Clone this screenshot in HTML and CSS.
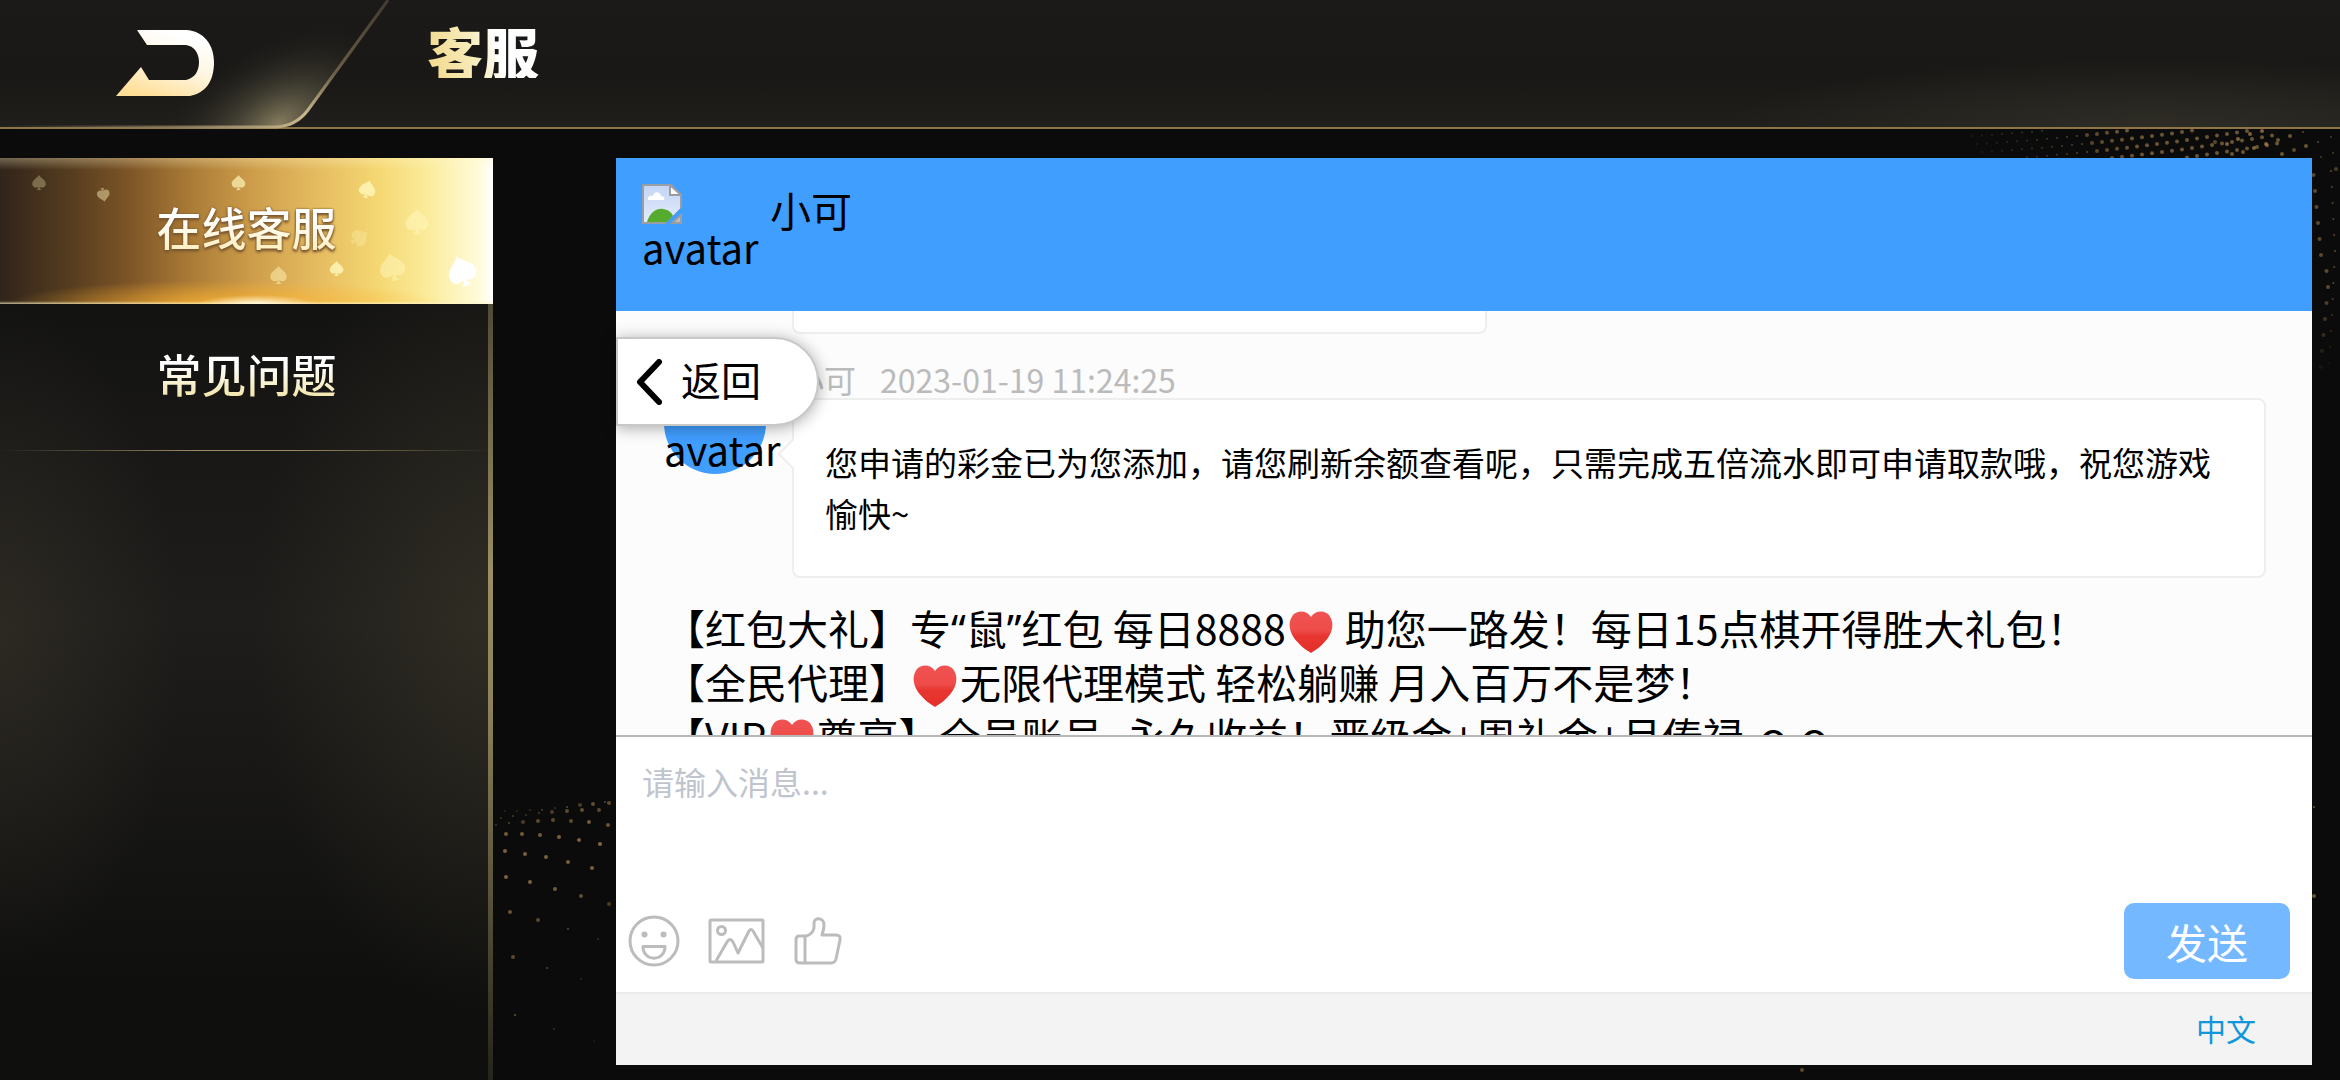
FILE: index.html
```html
<!DOCTYPE html>
<html lang="zh-CN">
<head>
<meta charset="utf-8">
<meta name="viewport" content="width=device-width, initial-scale=1">
<title>客服</title>
<link rel="stylesheet" href="styles.css">
<script src="dots.js" defer></script>
</head>
<body>
<svg class="defs" aria-hidden="true">
  <defs>
    <linearGradient id="gold" x1="0.7" y1="0.1" x2="0.3" y2="1"><stop offset="0" stop-color="#fff"/><stop offset="0.45" stop-color="#fff6e2"/><stop offset="1" stop-color="#ffdf98"/></linearGradient>
    <linearGradient id="edge" gradientUnits="userSpaceOnUse" x1="0" y1="127" x2="388" y2="0"><stop offset="0" stop-color="#8a7c5c" stop-opacity="0"/><stop offset="0.4" stop-color="#8a7c5c" stop-opacity=".8"/><stop offset="0.72" stop-color="#c9b88e"/><stop offset="0.82" stop-color="#6c5e47"/><stop offset="1" stop-color="#423b2f"/></linearGradient>
    <radialGradient id="glow" gradientUnits="userSpaceOnUse" cx="278" cy="124" r="140" gradientTransform="translate(278 124) rotate(-30) scale(1 .6) translate(-278 -124)"><stop offset="0" stop-color="#857b5d"/><stop offset="0.4" stop-color="#4d493a" stop-opacity=".7"/><stop offset="1" stop-color="#1c1b19" stop-opacity="0"/></radialGradient>
    <linearGradient id="red" x1="0" y1="0" x2="0" y2="1"><stop offset="0" stop-color="#f05252"/><stop offset="0.45" stop-color="#ee4c49"/><stop offset="0.6" stop-color="#e73630"/><stop offset="1" stop-color="#e42f2b"/></linearGradient>
    <linearGradient id="sky" x1="0" y1="0" x2="0" y2="1"><stop offset="0" stop-color="#c3d5f5"/><stop offset="1" stop-color="#e4ecfb"/></linearGradient>
    <symbol id="heart" viewBox="0 0 45 42"><path d="M22.500 6C18-1 9-1 4.500 4C-1.500 12 1 22 8 30C13 36 18 39 22.500 42C27 39 32 36 37 30C44 22 46.500 12 40.500 4C36-1 27-1 22.500 6Z" fill="url(#red)"/></symbol>
    <symbol id="spade" viewBox="0 0 20 22"><path d="M10 0C12 4 20 7 20 13C20 18 15 20 11 17.500C11 19 12 21 14 22H6C8 21 9 19 9 17.500C5 20 0 18 0 13C0 7 8 4 10 0Z"/></symbol>
    <symbol id="broken" viewBox="0 0 40 40"><path d="M1 1H29L39 11V25L25 39H1Z" fill="url(#sky)" stroke="#9a9da3" stroke-width="2"/><path d="M6 16C5 12 9 11 11 12C12 7 18 7 19 12C23 12 23 16 21 16Z" fill="#fff"/><path d="M5 38C8 28 15 24 21 25C27 26 30 29 31 32L25 38Z" fill="#55ab2e"/><path d="M28 1V11H39Z" fill="#fff" stroke="#9a9da3" stroke-width="2"/><path d="M40 23V28L29 40H23Z" fill="#409eff"/><path d="M39 31V39H30Z" fill="#b7c5b7" stroke="#9a9da3" stroke-width="2"/></symbol>
  </defs>
</svg>

<svg class="dots" id="dots" aria-hidden="true"></svg>

<header class="topbar">
  <svg class="topbar-art" width="400" height="129" aria-hidden="true">
    <path d="M0 0H388L308 112Q296 127 276 127H0Z" fill="url(#glow)"/>
    <path d="M0 127H276Q296 126 308 110L388 0" fill="none" stroke="url(#edge)" stroke-width="3"/>
  </svg>
  <button class="exit" type="button" aria-label="返回">
    <svg width="98" height="66" viewBox="116 30 98 66"><path d="M137 30H186C204 31 214 45 214 62C214 82 205 93 190 96H116L141 67L149 80H186C195 78 199 71 199 62C199 53 194 46 186 45H147Z" fill="url(#gold)"/></svg>
  </button>
  <h1 class="title">客服</h1>
</header>

<div class="content">
  <nav class="sidebar">
    <a class="tab tab-active" href="#online">
      <svg class="spades" viewBox="0 0 493 146" aria-hidden="true">
        <g fill="#fff6b8">
          <use href="#spade" x="32" y="17" width="14" height="15" opacity=".3"/>
          <use href="#spade" x="96" y="30" width="13" height="14" opacity=".45" transform="rotate(170 103 37)"/>
          <use href="#spade" x="231" y="17" width="15" height="15" opacity=".7"/>
          <use href="#spade" x="359" y="22" width="17" height="18" opacity=".85" transform="rotate(14 367 31)"/>
          <use href="#spade" x="404" y="51" width="26" height="25" opacity=".6"/>
          <use href="#spade" x="351" y="70" width="17" height="20" opacity=".3" transform="rotate(60 360 80)"/>
          <use href="#spade" x="378" y="95" width="28" height="28" opacity=".55" transform="rotate(-12 392 108)"/>
          <use href="#spade" x="329" y="103" width="15" height="15" opacity=".85"/>
          <use href="#spade" x="269" y="108" width="19" height="18" opacity=".5"/>
        </g>
        <use href="#spade" x="446" y="98" width="32" height="31" fill="#fff" transform="rotate(-20 461 114)"/>
      </svg>
      <span class="tab-label">在线客服</span>
    </a>
    <a class="tab" href="#faq"><span class="tab-label">常见问题</span></a>
  </nav>

  <main class="chat">
    <header class="chat-head">
      <div class="head-avatar">
        <svg width="40" height="40" aria-hidden="true"><use href="#broken"/></svg>
        <span>avatar</span>
      </div>
      <span class="agent">小可</span>
    </header>

    <section class="messages">
      <div class="bubble bubble-cut"></div>
      <article class="message">
        <div class="avatar"><span>avatar</span></div>
        <div class="message-body">
          <div class="meta"><span>小可</span><time datetime="2023-01-19T11:24:25">2023-01-19 11:24:25</time></div>
          <div class="bubble bubble-text">您申请的彩金已为您添加，请您刷新余额查看呢，只需完成五倍流水即可申请取款哦，祝您游戏愉快~</div>
        </div>
      </article>
      <div class="promo">
        <p>【红包大礼】专<span class="latin">“</span>鼠<span class="latin">”</span>红包 每日8888<svg class="heart" aria-label="红心"><use href="#heart"/></svg> 助您一路发！每日15点棋开得胜大礼包！</p>
        <p>【全民代理】<svg class="heart" aria-label="红心"><use href="#heart"/></svg>无限代理模式 轻松躺赚 月入百万不是梦！</p>
        <p>【VIP<svg class="heart" aria-label="红心"><use href="#heart"/></svg>尊享】全员账号, 永久收益！晋级金+周礼金+月俸禄 ｏｏ</p>
      </div>
    </section>

    <form class="composer">
      <textarea class="field" placeholder="请输入消息..." aria-label="请输入消息"></textarea>
      <div class="tools">
        <button class="tool" type="button" aria-label="表情">
          <svg width="52" height="52" viewBox="0 0 52 52"><circle cx="26" cy="26" r="24"/><path d="M15 31.500H37C37 47 15 47 15 31.500Z"/><circle class="dot" cx="16.500" cy="19.500" r="3"/><circle class="dot" cx="35.500" cy="19.500" r="3"/></svg>
        </button>
        <button class="tool" type="button" aria-label="图片">
          <svg width="58" height="46" viewBox="0 0 58 46"><rect x="2" y="2" width="53" height="42" rx="1"/><circle cx="13.500" cy="12.500" r="4"/><path d="M8 43L19 24Q22 19 25 24L30 35L41 13Q43 10 45 13L55 30"/></svg>
        </button>
        <button class="tool" type="button" aria-label="点赞">
          <svg width="48" height="50" viewBox="0 0 48 50"><path d="M11 20V47M5 20H12C17 19 19 16 20 12V7C20 1 30 1 30 9C30 13 29 16 28 19H42Q47 19 46 24L42 43Q41 47 37 47H6Q2 47 2 43V24Q2 20 5 20Z"/></svg>
        </button>
        <button class="send" type="submit">发送</button>
      </div>
    </form>

    <footer class="chat-foot"><a class="lang" href="#lang">中文</a></footer>

    <button class="back" type="button">
      <svg width="26" height="46" viewBox="0 0 26 46" aria-hidden="true"><path d="M23 3L4 23L23 43" fill="none" stroke="#000" stroke-width="6" stroke-linecap="round" stroke-linejoin="round"/></svg>
      <span class="back-label">返回</span>
    </button>
  </main>
</div>
</body>
</html>
```
FILE: dots.js
```js
// Gold dust behind the panels: [x, y, radius, opacity].
// Left cluster is measured from the left edge, right cluster from the right edge.
const left = [
  [496,825,1,.35],[501,818,1,.3],[505,811,1,.2],[509,823,1,.45],[513,816,1,.4],[517,811,1,.25],[523,822,2,.4],[526,815,1,.35],[530,810,1,.3],
  [538,821,2,.5],[539,813,1,.4],[542,810,1,.4],[553,820,2,.5],[552,812,2,.4],[555,808,1,.3],[571,821,2,.5],[567,811,2,.5],[567,807,1,.5],
  [582,810,2,.55],[580,805,2,.4],[589,822,2,.65],[599,810,2,.5],[593,804,2,.55],[605,802,1,.5],[609,803,2,.5],[608,825,2,.6],
  [506,834,2,.65],[522,834,2,.65],[540,835,2,.65],[559,837,2,.7],[579,840,2,.7],[600,844,2,.75],
  [505,851,2,.7],[525,854,2,.7],[546,857,2,.7],[568,862,2,.7],[592,868,2,.7],
  [506,877,2,.7],[530,882,2,.7],[555,889,2,.65],[581,896,2,.55],[609,904,2,.4],
  [510,912,2,.6],[538,920,2,.5],[568,929,1,.5],[598,939,1,.3],[513,957,2,.5],[547,968,1,.5],[581,979,1,.25],
  [515,1015,1,.6],[554,1029,1,.3],[594,1041,1,.15],[477,836,1,.2],[487,850,1,.3],[484,873,1,.5],[483,904,1,.6],[481,946,1,.6],[477,1002,1,.7]
];
const right = [];
for (let row = 0; row < 6; row++) {
  for (let i = 0; i < 29; i++) {
    const x = 1972 + i * 10 + row * 5;
    const y = 136 - i * 0.6 * (1 + i / 30) + row * 8;
    if (y > 130 && y < 158) right.push([x, y, i > 10 ? 2 : 1, Math.min(0.6, 0.15 + i * 0.03)]);
  }
}
right.push([2215,142,2,.5],[2227,144,2,.7],[2232,154,2,.6],[2238,139,2,.7],[2243,152,2,.6],[2250,134,2,.7],[2254,148,2,.7],[2262,131,2,.7],[2266,144,2,.7],[2282,154,2,.6],[2278,140,2,.6],[2290,136,2,.6],[2294,150,2,.5],[2303,132,1,.5],[2306,146,2,.6],[2318,142,1,.5],[2331,137,1,.4],[2321,157,1,.4],[2333,153,1,.4],[2336,169,2,.4]);
for (let i = 0; i < 13; i++) {
  const y = 175 + i * 16, fade = i < 7 ? 0.5 : Math.max(0.1, 0.5 - (i - 7) * 0.08);
  right.push([2324 - Math.abs(7 - i) * 1.5 + (i < 6 ? 0 : 4), y, 2, fade], [2335 - Math.abs(5 - i) * 0.8, y - 4, 1, fade]);
}
right.push([2314,896,2,.6],[2314,807,1,.6],[1802,1070,2,.5]);

const svg = document.getElementById('dots');
function draw() {
  const shift = window.innerWidth - 2340;
  const circle = ([x, y, r, o], dx) => `<circle cx="${x + dx}" cy="${y}" r="${r}" opacity="${o}"/>`;
  svg.innerHTML = left.map(d => circle(d, 0)).join('') + right.map(d => circle(d, shift)).join('');
}
window.addEventListener('resize', draw);
draw();
```
FILE: styles.css
```css
* { box-sizing: border-box; }

body {
  margin: 0;
  height: 100vh;
  display: flex;
  flex-direction: column;
  overflow: hidden;
  background: #0b0b0b;
  color: #000;
  font-family: "Noto Sans CJK SC", "Noto Sans", sans-serif;
  font-size: 41px;
}

button {
  border: 0;
  padding: 0;
  background: none;
  font: inherit;
  color: inherit;
  cursor: pointer;
}

a { text-decoration: none; }
svg { display: block; }
.defs { position: absolute; width: 0; height: 0; }

.dots {
  position: absolute;
  inset: 0;
  width: 100%;
  height: 100%;
  fill: #a98550;
  pointer-events: none;
}

/* Top bar */
.topbar {
  position: relative;
  flex: none;
  height: 129px;
  display: flex;
  align-items: flex-start;
  padding: 24px 116px;
  border-bottom: 2px solid #8d7548;
  background:
    radial-gradient(ellipse 420px 70px at 92% 100%, #2e2c25, transparent),
    linear-gradient(#1b1a19, #191816 60%, #211f1b);
}

.topbar-art { position: absolute; left: 0; top: 0; }
.exit { position: relative; margin-top: 6px; }

.title {
  position: relative;
  margin: 0 0 0 213px;
  font-size: 56px;
  line-height: 54px;
  font-weight: 900;
  background: linear-gradient(75deg, #f3dc94 10%, #f8eec0 45%, #fff 62%);
  background-clip: text;
  -webkit-background-clip: text;
  color: transparent;
}

/* Body */
.content {
  flex: 1;
  min-height: 0;
  display: flex;
  gap: 123px;
  padding: 29px 28px 0 0;
}

.sidebar {
  position: relative;
  flex: none;
  width: 493px;
  background:
    linear-gradient(#37342480, #9a8e62 45%, #8c8158 60%, #25241b) right / 5px 100% no-repeat,
    radial-gradient(ellipse 240px 400px at 100% 50%, #3d392a90, transparent),
    radial-gradient(ellipse 180px 330px at 0 52%, #38332990, transparent),
    linear-gradient(#0e0e0e, #1e1d1b 50%, #0f0f0e 90%);
}

.tab {
  position: relative;
  display: flex;
  align-items: center;
  justify-content: center;
  height: 147px;
  padding-bottom: 8px;
  background: linear-gradient(90deg, transparent, #9b8a64 40%, #9b8a64 60%, transparent) bottom / 100% 1px no-repeat;
}

.tab-active {
  height: 146px;
  background:
    radial-gradient(ellipse 60px 9px at 52% 100%, #fffbe0, transparent),
    linear-gradient(0deg, #fff6c8b0, transparent 3px),
    linear-gradient(#fff6c850, transparent 12px),
    radial-gradient(ellipse 220px 24px at 46% 100%, #ffb32ecc, transparent),
    linear-gradient(90deg, #31241a, #553c1f 14%, #7c5427 26%, #a87935 38%, #cf9f4c 52%, #e6bd61 65%, #f5d873 77%, #fbec9c 87%, #fffbd9 97%, #fff);
}

.spades { position: absolute; inset: 0; width: 100%; height: 100%; }

.tab-label {
  position: relative;
  font-size: 45px;
  line-height: 60px;
  font-weight: 500;
  background: linear-gradient(#fff 35%, #f3e7b0 85%);
  background-clip: text;
  -webkit-background-clip: text;
  color: transparent;
}

.tab-active .tab-label {
  background-image: linear-gradient(#fff 35%, #fff0c4 85%);
  filter: drop-shadow(0 0 1px #7a5730) drop-shadow(0 2px 1px #7a5730);
}

/* Chat */
.chat {
  position: relative;
  flex: 1;
  min-width: 0;
  display: flex;
  flex-direction: column;
  margin-bottom: 15px;
  background: #fff;
}

.chat-head {
  flex: none;
  display: flex;
  gap: 8px;
  height: 153px;
  padding: 26px;
  background: #409eff;
}

.head-avatar { width: 120px; font-size: 40px; line-height: 46px; }
.agent { line-height: 50px; }

.messages {
  flex: 1;
  min-height: 0;
  overflow: hidden;
  padding: 0 46px 0 48px;
  background: #fcfcfc;
}

.bubble {
  border: 2px solid #eee;
  border-radius: 8px;
  background: #fff;
}

.bubble-cut {
  width: 695px;
  height: 23px;
  margin-left: 128px;
  border-top: 0;
  border-top-left-radius: 0;
  border-top-right-radius: 0;
}

.message { display: flex; gap: 26px; margin-top: 26px; }

.avatar {
  flex: none;
  width: 102px;
  height: 102px;
  margin-top: 12px;
  padding-top: 52px;
  border-radius: 50%;
  background: #409eff;
  font-size: 40px;
  line-height: 50px;
}

.message-body { flex: 1; min-width: 0; }

.meta {
  display: flex;
  gap: 24px;
  font-size: 32px;
  line-height: 38px;
  color: #bbb;
}

.bubble-text {
  position: relative;
  padding: 37px 30px 37px 31px;
  font-size: 33px;
  line-height: 51px;
}

.bubble-text::before {
  content: "";
  position: absolute;
  left: -12px;
  top: 43px;
  width: 20px;
  height: 20px;
  border: 2px solid #eee;
  border-width: 0 0 2px 2px;
  background: #fff;
  rotate: 45deg;
}

.promo { margin-top: 22px; white-space: nowrap; }
.promo p { margin: 0; height: 54px; line-height: 54px; }
.latin { font-family: "Noto Sans", sans-serif; line-height: 1; }
.heart { display: inline-block; width: 46px; height: 42px; margin: 0 2px; vertical-align: -8px; }

.composer {
  flex: none;
  display: flex;
  flex-direction: column;
  border-top: 2px solid #b8b8b8;
}

.field {
  height: 160px;
  padding: 19px 26px;
  border: 0;
  outline: 0;
  resize: none;
  background: transparent;
  font: inherit;
  font-size: 32px;
  line-height: 50px;
}

.field::placeholder { color: #c0c4cc; opacity: 1; }

.tools {
  display: flex;
  align-items: center;
  gap: 28px;
  height: 95px;
  padding: 0 22px 8px 12px;
}

.tool svg {
  fill: none;
  stroke: #bcbcbc;
  stroke-width: 3;
  stroke-linejoin: round;
}

.tool .dot { fill: #bcbcbc; stroke: none; }

.send {
  width: 166px;
  height: 76px;
  margin-left: auto;
  border-radius: 10px;
  background: #74b9ff;
  color: #fff;
}

.chat-foot {
  flex: none;
  display: flex;
  align-items: center;
  justify-content: flex-end;
  height: 73px;
  padding: 0 56px 4px;
  border-top: 2px solid #eaeaea;
  background: #f3f3f3;
}

.lang { font-size: 30px; color: #1296db; }

/* Floating back pill over the message list */
.back {
  position: absolute;
  left: 0;
  top: 179px;
  display: flex;
  align-items: center;
  gap: 19px;
  width: 203px;
  height: 89px;
  padding-left: 18px;
  border: 2px solid #c8c8c8;
  border-radius: 0 45px 45px 0;
  background: #fff;
  box-shadow: 0 2px 16px #0005;
}

.back-label { padding-bottom: 5px; font-size: 40px; }
```
